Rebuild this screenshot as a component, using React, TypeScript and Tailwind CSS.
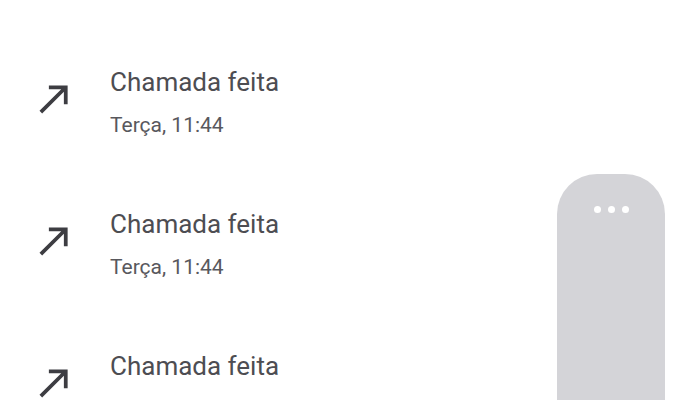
import React from "react";

const calls = [
  { title: "Chamada feita", time: "Terça, 11:44" },
  { title: "Chamada feita", time: "Terça, 11:44" },
  { title: "Chamada feita", time: "Terça, 11:44" },
];

function CallMadeIcon() {
  return (
    <svg viewBox="0 0 24 24" className="w-[45px] h-[45px] shrink-0" fill="#3d3d42">
      <path d="M9 5v2h6.59L4 18.59 5.41 20 17 8.41V15h2V5z" />
    </svg>
  );
}

export default function App() {
  return (
    <div
      className="relative w-[700px] h-[400px] overflow-hidden bg-white"
      style={{ fontFamily: "Roboto, 'Noto Sans', sans-serif" }}
    >
      {/* lista de chamadas */}
      <div className="flex flex-col gap-[69px] pt-[66px]">
        {calls.map((c, i) => (
          <div key={i} className="flex items-start pl-[32px]">
            <div className="mt-[10px]">
              <CallMadeIcon />
            </div>
            <div className="flex flex-col gap-[13px] ml-[33px]">
              <p className="text-[26px] leading-[32px] text-[#4d4d52]">{c.title}</p>
              <p className="text-[21px] leading-[28px] text-[#58585d]">{c.time}</p>
            </div>
          </div>
        ))}
      </div>

      {/* painel lateral */}
      <div className="absolute left-[557px] top-[174px] w-[108px] h-[260px] rounded-t-[40px] bg-[#d4d4d8] flex justify-center pt-[32px]">
        <div className="flex gap-[7px]">
          <span className="w-[7px] h-[7px] rounded-full bg-white" />
          <span className="w-[7px] h-[7px] rounded-full bg-white" />
          <span className="w-[7px] h-[7px] rounded-full bg-white" />
        </div>
      </div>
    </div>
  );
}
